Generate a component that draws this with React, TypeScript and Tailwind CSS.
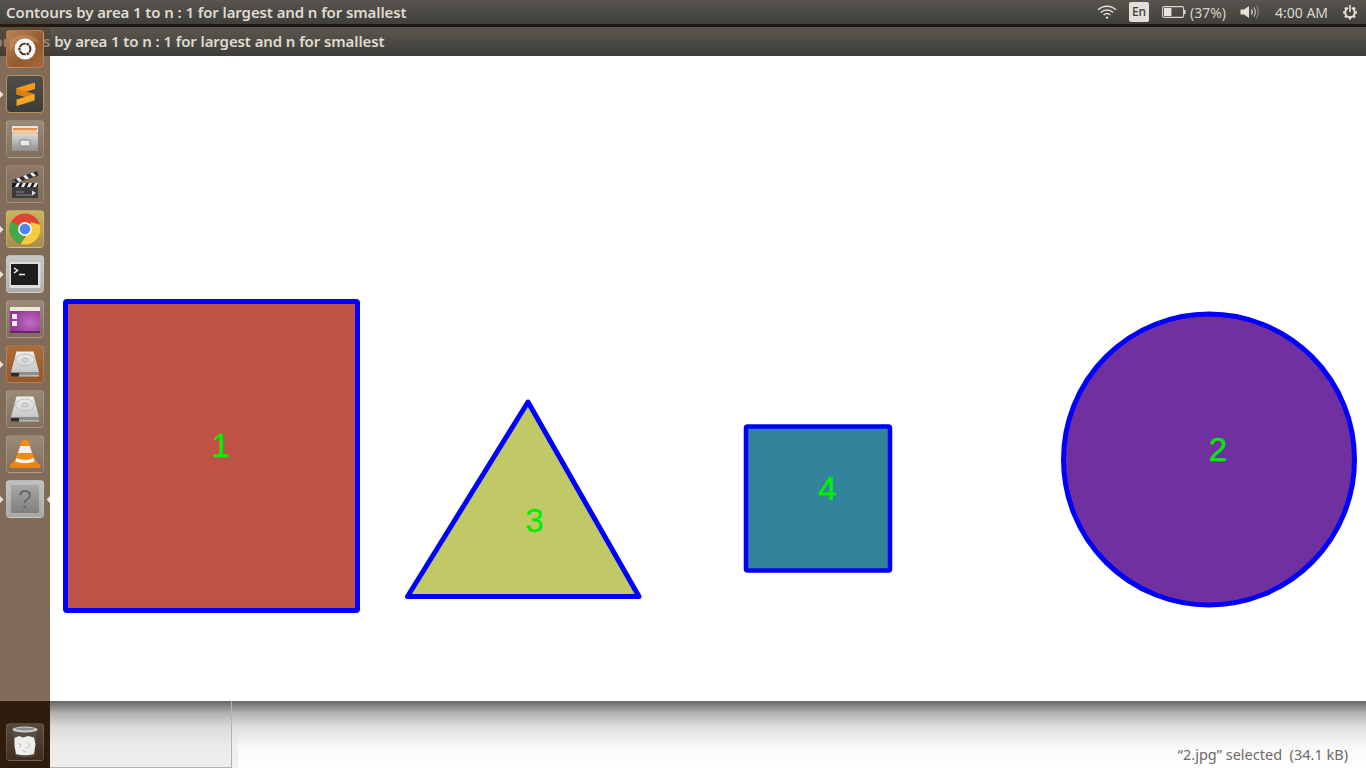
import React from "react";

const TITLE = "Contours by area 1 to n : 1 for largest and n for smallest";

function Tile({ bg, children, ring = "border-[#ffffff2c]" }: { bg: string; children: React.ReactNode; ring?: string }) {
  return (
    <div className={`w-[38px] h-[38px] rounded-[4px] border overflow-hidden ${ring} ${bg}`}>
      <svg viewBox="0 0 38 38" className="block -m-px blur-[0.4px]" style={{ width: 38, height: 38 }}>
        {children}
      </svg>
    </div>
  );
}

function Pip({ left, right }: { left?: boolean; right?: boolean }) {
  return (
    <>
      {left && (
        <svg viewBox="0 0 4 7" className="absolute left-0 top-[16px] w-[4px] h-[7px]">
          <path d="M0 0L3.5 3.5L0 7Z" fill="#e8e4e0" />
        </svg>
      )}
      {right && (
        <svg viewBox="0 0 4 7" className="absolute right-0 top-[16px] w-[4px] h-[7px]">
          <path d="M4 0L0.5 3.5L4 7Z" fill="#e8e4e0" />
        </svg>
      )}
    </>
  );
}

function Slot({ children, left, right }: { children: React.ReactNode; left?: boolean; right?: boolean }) {
  return (
    <div className="relative h-[38px] w-[50px] flex justify-center">
      <Pip left={left} right={right} />
      {children}
    </div>
  );
}

function Disk({ id }: { id: string }) {
  return (
    <g>
      <defs>
        <linearGradient id={id} x1="0" y1="0" x2="0" y2="1">
          <stop offset="0" stopColor="#efefed" />
          <stop offset="1" stopColor="#c6c6c4" />
        </linearGradient>
      </defs>
      <path d="M10.5 6.5H27.5L33 27H5Z" fill={`url(#${id})`} />
      <ellipse cx="19" cy="15" rx="9.5" ry="6" fill="none" stroke="#b5b5b3" strokeWidth="0.8" />
      <ellipse cx="19" cy="15" rx="3" ry="1.8" fill="none" stroke="#a5a5a3" strokeWidth="0.8" />
      <path d="M5 27H33V31.5H5Z" fill="#8d8d8b" />
      <path d="M5 28H13V31.5H5Z" fill="#2e2e2e" />
      <path d="M13 30H33V31.5H13Z" fill="#b7b7b5" />
    </g>
  );
}

function Launcher() {
  return (
    <aside className="absolute left-0 top-[24px] bottom-0 w-[50px] flex flex-col">
      <div className="h-[32px] bg-[linear-gradient(#2a1a0cf2_0,#2a1a0cf2_3px,#5a42308c_3px,#4f3a2a8c_100%)]" />
      <div className="flex-1 bg-[#806c59]" />
      <div className="h-[67px] bg-[#2e1c0c] flex flex-col justify-start items-center pt-[22px]">
        <div className="w-[38px] h-[38px] rounded-[4px] border border-[#ffffff22] bg-[linear-gradient(#5b4a3a,#3f2e1f)] overflow-hidden">
          <svg viewBox="0 0 38 38" className="block -m-px blur-[0.4px]" style={{ width: 38, height: 38 }}>
            <path d="M7 6H31L28.5 33Q19 35.5 9.5 33Z" fill="#57544f" opacity="0.7" />
            <ellipse cx="19" cy="6.5" rx="12.5" ry="3" fill="#cfcfcd" />
            <ellipse cx="19" cy="6" rx="10" ry="1.5" fill="#8b8b88" />
            <path d="M8.5 15L13 13L17 14.5L22 13L28 14.5L29.5 21L28 31Q19 33.5 10 31L8.5 23Z" fill="#eeeeec" />
            <path d="M12 20L15 22L13 25M21 19L24 22L21 26M16 27L20 29" fill="none" stroke="#c2c2c0" strokeWidth="1" />
          </svg>
        </div>
      </div>
      <div className="absolute left-0 top-[6px] w-[50px] flex flex-col gap-[7px]">
        <Slot>
          <Tile bg="bg-[linear-gradient(135deg,#b98456,#94592c_60%,#a66b3c)]">
            <path d="M4 10C14 2 30 4 34 14C28 9 12 9 4 22Z" fill="#c79263" opacity="0.55" />
            <circle cx="19" cy="19" r="10.5" fill="#fbfaf9" />
            <circle cx="19" cy="19" r="5.4" fill="none" stroke="#4a2a10" strokeWidth="1.9" />
            <circle cx="13.4" cy="19" r="1.7" fill="#4a2a10" stroke="#fbfaf9" strokeWidth="0.8" />
            <circle cx="21.8" cy="14.2" r="1.7" fill="#4a2a10" stroke="#fbfaf9" strokeWidth="0.8" />
            <circle cx="21.8" cy="23.8" r="1.7" fill="#4a2a10" stroke="#fbfaf9" strokeWidth="0.8" />
          </Tile>
        </Slot>
        <Slot left>
          <Tile bg="bg-[linear-gradient(#4e4e4c,#3c3c3b)]" ring="border-[#c08d55]">
            <path d="M29 7.5V14L10.5 19.5V13Z" fill="#f39a1e" />
            <path d="M10.5 19.5L28.5 25V19L10.5 13.5Z" fill="#d57f14" />
            <path d="M28.5 19V25.5L10.5 31V24.5Z" fill="#f6a326" />
          </Tile>
        </Slot>
        <Slot>
          <Tile bg="bg-[linear-gradient(#9c8b7a,#806d5b)]">
            <defs>
              <linearGradient id="cab" x1="0" y1="0" x2="0" y2="1">
                <stop offset="0" stopColor="#d8d8d6" />
                <stop offset="1" stopColor="#8f8f8d" />
              </linearGradient>
            </defs>
            <path d="M6 6H32V13H6Z" fill="#e9e6e2" />
            <path d="M7 8H31V14H7Z" fill="#e08e52" />
            <path d="M7 10H31V15H7Z" fill="#f0c89c" />
            <path d="M6 14H32V31H6Z" fill="url(#cab)" />
            <rect x="14" y="20" width="10" height="6" rx="1" fill="#e8e8e6" stroke="#6e6e6c" strokeWidth="0.8" />
          </Tile>
        </Slot>
        <Slot>
          <Tile bg="bg-[linear-gradient(#8d7a68,#7e6b58)]">
            <path d="M6 15L31 6L32.5 10.5L7.5 19Z" fill="#2e2e2e" />
            <path d="M10 13.5L13 12.4L16 16L13 17ZM17 11L20 10L23 13.2L20 14.4ZM24 8.5L27 7.5L30 10.7L27 11.8Z" fill="#eeeeee" />
            <circle cx="7.5" cy="17" r="2" fill="#666" />
            <path d="M6 18H32V33H6Z" fill="#3c3c3c" />
            <path d="M6 18H32V22H6Z" fill="#191919" />
            <path d="M9 22L11 18H14L12 22ZM15 22L17 18H20L18 22ZM21 22L23 18H26L24 22ZM27 22L29 18H32L30 22Z" fill="#efefef" />
            <path d="M10 27H18M10 30H26" stroke="#8b8b8b" strokeWidth="1" />
            <path d="M26 25.5L30 28L26 30.5Z" fill="#ddd" />
          </Tile>
        </Slot>
        <Slot left>
          <Tile bg="bg-[linear-gradient(#cdb260,#a98e4c)]">
            <circle cx="19" cy="19" r="15.5" fill="#e04434" />
            <path d="M5.6 11.2A15.5 15.5 0 0 0 14.6 33.9L22 21L12 15Z" fill="#42a84a" />
            <path d="M33.9 14.8A15.5 15.5 0 0 1 14.6 33.9L22 23L25 12Z" fill="#f5cc3c" />
            <circle cx="19" cy="19" r="7" fill="#f2f2f2" />
            <circle cx="19" cy="19" r="5.3" fill="#4d86e6" />
          </Tile>
        </Slot>
        <Slot left>
          <Tile bg="bg-[linear-gradient(#c6c6c4,#adadab)]">
            <rect x="3.5" y="7" width="31" height="26" rx="1" fill="#dededc" />
            <rect x="5" y="9" width="27" height="21" fill="#1d1d1d" />
            <path d="M8 13L11.5 15.5L8 18" fill="none" stroke="#f3f3f3" strokeWidth="1.5" />
            <path d="M13 19.5H19" stroke="#f3f3f3" strokeWidth="1.5" />
          </Tile>
        </Slot>
        <Slot>
          <Tile bg="bg-[linear-gradient(#9b8a79,#806d5b)]">
            <defs>
              <radialGradient id="pur" cx="0.68" cy="0.6" r="0.6">
                <stop offset="0" stopColor="#c06cc0" />
                <stop offset="1" stopColor="#93389a" />
              </radialGradient>
            </defs>
            <rect x="4" y="7" width="30" height="26" rx="1" fill="url(#pur)" />
            <rect x="4" y="7" width="30" height="4" fill="#ece9d6" />
            <rect x="6" y="14" width="5" height="5" fill="#f2e9f2" />
            <rect x="6" y="21" width="5" height="5" fill="#f2e9f2" />
            <rect x="4" y="31" width="30" height="2" fill="#6c2470" />
          </Tile>
        </Slot>
        <Slot left>
          <Tile bg="bg-[linear-gradient(#ab6c3a,#96582a)]">
            <Disk id="d1" />
          </Tile>
        </Slot>
        <Slot>
          <Tile bg="bg-[linear-gradient(#9a8976,#826f5c)]">
            <Disk id="d2" />
          </Tile>
        </Slot>
        <Slot>
          <Tile bg="bg-[linear-gradient(#9c8a78,#806d5a)]">
            <path d="M3 31L9 25H29L35 31L33 33H5Z" fill="#ee8410" />
            <path d="M16 5H22L30 28Q19 33 8 28Z" fill="#f28a16" />
            <path d="M14.2 11H23.8L26 18H12Z" fill="#eeeeee" />
            <path d="M10.5 23Q19 27 27.5 23L28.7 26.5Q19 30 9.3 26.5Z" fill="#f4f4f4" />
          </Tile>
        </Slot>
        <Slot left right>
          <Tile bg="bg-[linear-gradient(#c0c0be,#a8a8a6)]">
            <defs>
              <linearGradient id="unk" x1="0" y1="0" x2="0" y2="1">
                <stop offset="0" stopColor="#a9a9a7" />
                <stop offset="1" stopColor="#7f7f7d" />
              </linearGradient>
            </defs>
            <rect x="5" y="5" width="28" height="28" rx="1" fill="url(#unk)" />
            <text x="19" y="28" textAnchor="middle" fontFamily="'Liberation Sans', sans-serif" fontSize="25" fill="#6b6b69">?</text>
          </Tile>
        </Slot>
      </div>
    </aside>
  );
}

function Indicators() {
  return (
    <div className="flex items-center h-6 text-[14px] text-[#dcd8d0] pr-[8px] font-['Noto_Sans',sans-serif]">
      <svg viewBox="0 0 20 16" className="w-[20px] h-[16px] mr-[12px]" fill="none" stroke="#e4e0d8" strokeWidth="1.4">
        <path d="M1 5.8C6 1 14 1 19 5.8" />
        <path d="M3.8 8.5C7.2 5.2 12.8 5.2 16.2 8.5" />
        <path d="M6.6 11C8.6 9.3 11.4 9.3 13.4 11" />
        <circle cx="10" cy="13.6" r="1.2" fill="#e4e0d8" stroke="none" />
      </svg>
      <div className="w-[20px] h-[20px] rounded-[2px] bg-[#e2dfd9] text-[#3d3c38] text-[12px] font-medium flex items-center justify-center mr-[13px]">En</div>
      <svg viewBox="0 0 24 12" className="w-[24px] h-[12px] mr-[4px]">
        <rect x="0.6" y="0.6" width="21" height="10.8" rx="1.5" fill="none" stroke="#dcd8d0" strokeWidth="1.1" />
        <rect x="2" y="2" width="7.4" height="8" fill="#e8e5de" />
        <rect x="22" y="4" width="1.6" height="4" fill="#dcd8d0" />
      </svg>
      <span className="w-[50px] text-[#d5d1c9]">(37%)</span>
      <svg viewBox="0 0 20 16" className="w-[20px] h-[16px] mr-[15px]">
        <path d="M0.5 5.5H4L9 2V14L4 10.5H0.5Z" fill="#e4e0d8" />
        <path d="M11.5 5.5Q13 8 11.5 10.5" fill="none" stroke="#e4e0d8" strokeWidth="1.3" />
        <path d="M14 3.5Q16.6 8 14 12.5" fill="none" stroke="#c4c0b8" strokeWidth="1.2" />
        <path d="M16.5 1.5Q20 8 16.5 14.5" fill="none" stroke="#88857e" strokeWidth="1.1" />
      </svg>
      <span className="w-[67px]">4:00 AM</span>
      <svg viewBox="0 0 16 16" className="w-[16px] h-[16px]" fill="none" stroke="#e8e4dc">
        <circle cx="8" cy="8.5" r="4.8" strokeWidth="2" />
        <path d="M8 13.5V15.5M1 8.5H2.8M13.2 8.5H15M3 3.6L4.3 4.9M11.7 12.2L13 13.4M13 3.6L11.7 4.9M4.3 12.2L3 13.4" strokeWidth="2.2" />
        <path d="M8 2.5V8.5" stroke="#43423d" strokeWidth="3.4" />
        <path d="M8 1V8" strokeWidth="1.6" />
      </svg>
    </div>
  );
}

function Shapes() {
  const digit = "'Liberation Sans', sans-serif";
  return (
    <svg viewBox="50 56 1316 645" className="block w-[1316px] h-[645px]">
      <rect x="65.5" y="301.5" width="292" height="309" rx="1.5" fill="#bf5246" stroke="#0000ff" strokeWidth="5" />
      <path d="M528 402L407.5 596.5H639Z" fill="#c0c966" stroke="#0000ff" strokeWidth="5" strokeLinejoin="round" />
      <rect x="746" y="426.5" width="144" height="144" rx="1.5" fill="#31849b" stroke="#0000ff" strokeWidth="4.5" />
      <circle cx="1209" cy="459.5" r="145.5" fill="#7030a0" stroke="#0000ff" strokeWidth="5" />
      <g fontFamily={digit} fontSize="33" fill="#00f000" stroke="#00f000" strokeWidth="0.35" textAnchor="middle">
        <text x="221" y="457">1</text>
        <text x="1218" y="461">2</text>
        <text x="534.5" y="532">3</text>
        <text x="827.5" y="500">4</text>
      </g>
    </svg>
  );
}

export default function App() {
  return (
    <div className="relative w-[1366px] h-[768px] overflow-hidden bg-white flex flex-col font-['Noto_Sans',sans-serif]">
      <header className="h-[24px] shrink-0 flex items-center justify-between pl-[6px] bg-[linear-gradient(#57554e,#403f3a)]">
        <span className="text-[15px] font-semibold text-[#dfdbd2] tracking-[-0.1px] leading-none">{TITLE}</span>
        <Indicators />
      </header>
      <div className="h-[3px] shrink-0 bg-[#191815]" />
      <div className="h-[29px] shrink-0 flex items-center bg-[linear-gradient(#5a5850,#3e3d38)] overflow-hidden">
        <span className="ml-[-16px] whitespace-nowrap text-[15px] font-semibold text-[#dfdbd2] tracking-[-0.1px] leading-none">{TITLE}</span>
      </div>
      <main className="pl-[50px] h-[645px] shrink-0 bg-white">
        <Shapes />
      </main>
      <footer className="flex-1 flex pl-[50px]">
        <div className="w-[182px] border-r border-b border-[#b3b2b0] bg-[linear-gradient(#666664_0,#b0b0ae_12px,#dcdbd9_26px,#ecebe9_46px,#efeeec_100%)]" />
        <div className="w-[6px] bg-[linear-gradient(#686868_0,#b4b4b4_12px,#e0e0e0_26px,#f1f0ef_46px)]" />
        <div className="flex-1 flex items-end justify-end pr-[18px] pb-[5px] bg-[linear-gradient(#676767_0,#b2b2b2_12px,#e0e0e0_26px,#f8f8f8_46px,#ffffff_100%)]">
          <span className="text-[14.5px] leading-[18px] text-[#6f6a66] whitespace-pre">“2.jpg” selected  (34.1 kB)</span>
        </div>
      </footer>
      <Launcher />
    </div>
  );
}
